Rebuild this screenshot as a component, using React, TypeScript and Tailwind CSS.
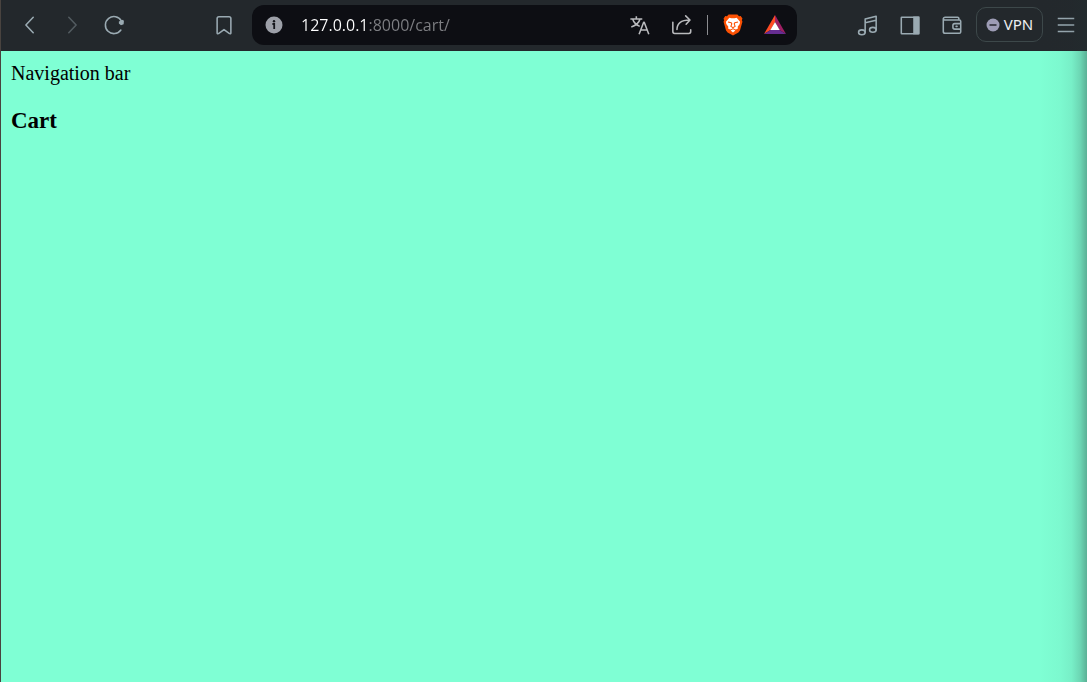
import type { ReactNode } from "react";

function ToolButton({ label, disabled = false, children }: { label: string; disabled?: boolean; children: ReactNode }) {
  return (
    <button
      type="button"
      aria-label={label}
      disabled={disabled}
      className="flex h-10 w-[42px] shrink-0 items-center justify-center text-[#9aaab2] disabled:text-[#525b60]"
    >
      {children}
    </button>
  );
}

function Icon({ children }: { children: ReactNode }) {
  return (
    <svg
      width="22"
      height="22"
      viewBox="0 0 24 24"
      fill="none"
      stroke="currentColor"
      strokeWidth="1.7"
      strokeLinecap="round"
      strokeLinejoin="round"
      aria-hidden="true"
    >
      {children}
    </svg>
  );
}

function BraveLogo() {
  return (
    <svg width="22" height="22" viewBox="0 0 24 24" aria-hidden="true">
      <path
        fill="#fb5104"
        d="M7.200 .5h9.600l1.800 2 1.800-.2 1.900 2.500-.6 2 .6 1.600-2.700 9.700-1.700 2.200L12 23.500l-5.900-3.200-1.700-2.200L1.700 8.400l.6-1.600-.6-2L3.600 2.300l1.800.2z"
      />
      <path
        fill="#fff"
        d="M8 4l2.300.5h3.400L16 4l3.700 4.400-.4 2.500-2.200 3.100.3 1.800-2.200 1.200-2.200-.9L12 15.700l-1 .4-2.200.9-2.200-1.200.3-1.800-2.200-3.100-.4-2.500zM12 16.500l2.600 1.600-2.600 2-2.600-2z"
      />
      <path
        fill="none"
        stroke="#fb5104"
        strokeWidth="1.200"
        d="M6.500 8.700l3.500.9.700 1.200-1 2.700 2.300 1.400 2.300-1.400-1-2.700.7-1.200 3.500-.9M12 14.900v1.200"
      />
    </svg>
  );
}

function RewardsLogo() {
  return (
    <svg width="24" height="24" viewBox="0 0 24 24" aria-hidden="true">
      <path fill="#ff4b24" d="M12 2v7L7.500 17 1 21z" />
      <path fill="#9e1f63" d="M12 2l11 19-6.500-4L12 9z" />
      <path fill="#662d91" d="M1 21l6.500-4h9l6.500 4z" />
      <path fill="#fff" d="M12 9l4.700 8H7.300z" />
    </svg>
  );
}

function AddressBar() {
  return (
    <div className="flex h-10 min-w-0 flex-1 items-center rounded-xl bg-[#0d0e13] px-px">
      <ToolButton label="View site information">
        <svg width="18" height="18" viewBox="0 0 18 18" aria-hidden="true">
          <circle cx="9" cy="9" r="8.500" fill="#9da0a8" />
          <circle cx="9" cy="5.300" r="1.200" fill="#15161b" />
          <path d="M7.400 8h1.800v5" stroke="#15161b" strokeWidth="1.800" fill="none" />
        </svg>
      </ToolButton>
      <input
        type="text"
        aria-label="Address"
        defaultValue="127.0.0.1:8000/cart/"
        spellCheck={false}
        className="ml-1 h-10 min-w-0 flex-1 bg-[linear-gradient(90deg,#fff_70px,#7e7f83_70px)] bg-clip-text pl-[2px] font-['Open_Sans','Noto_Sans',sans-serif] text-base text-transparent caret-white outline-none"
      />
      <ToolButton label="Translate this page">
        <span className="text-[#b9babd]">
          <Icon>
            <path
              strokeLinecap="butt"
              d="M1.500 5.500h13M8 2.500v3M4 5.500c1.200 4 4 6.500 7.700 8M12 5.500c-1 4.200-4.700 7-9.500 8.700M11 22l5-13h.6l5 13M12.700 17.500h7.300"
            />
          </Icon>
        </span>
      </ToolButton>
      <ToolButton label="Share this page">
        <span className="text-[#b9babd]">
          <Icon>
            <path d="M2 9v10.200a2 2 0 0 0 2 2h15.500a2 2 0 0 0 2-2v-2M6.500 17c0-6.500 4-10.500 14-10.500M16 2l4.700 4.500-4.200 4.700" />
          </Icon>
        </span>
      </ToolButton>
      <span className="mx-1 h-5 w-px shrink-0 bg-[#8b8c90]" />
      <ToolButton label="Brave Shields">
        <BraveLogo />
      </ToolButton>
      <ToolButton label="Brave Rewards">
        <RewardsLogo />
      </ToolButton>
    </div>
  );
}

function Toolbar() {
  return (
    <header className="flex h-[51px] items-center bg-[#23282c] pb-[2px] pl-2">
      <ToolButton label="Back">
        <Icon>
          <path d="M15.500 3.500L7.500 12l8 8.500" />
        </Icon>
      </ToolButton>
      <ToolButton label="Forward" disabled>
        <Icon>
          <path d="M8.500 3.500l8 8.500-8 8.500" />
        </Icon>
      </ToolButton>
      <ToolButton label="Reload">
        <Icon>
          <path d="M19.500 17.500A9.300 9.300 0 1 1 20 7.500" />
          <path fill="currentColor" stroke="none" d="M17.300 8.300l4.500-2 1 1.300-.3 3.600-2.900 1.200-2.300-2z" />
        </Icon>
      </ToolButton>
      <div className="ml-[68px] mr-[7px] shrink-0">
        <ToolButton label="Bookmark this page">
          <Icon>
            <path d="M4.500 5a2 2 0 0 1 2-2h11a2 2 0 0 1 2 2v15.700c0 .8-.9 1.100-1.500.6l-6-4.300-6 4.300c-.6.5-1.500.2-1.500-.6z" />
          </Icon>
        </ToolButton>
      </div>
      <AddressBar />
      <div className="ml-[50px] flex shrink-0 items-center">
        <ToolButton label="Media controls">
          <Icon>
            <ellipse cx="5.300" cy="20" rx="3.600" ry="2.700" />
            <ellipse cx="17.300" cy="17.300" rx="3.600" ry="2.700" />
            <path d="M8.900 20V5.500l12-3v14.800M8.900 9.500l12-2.700" />
          </Icon>
        </ToolButton>
        <ToolButton label="Side panel">
          <Icon>
            <rect x="2.500" y="3.500" width="19" height="18" rx=".5" />
            <path fill="currentColor" stroke="none" d="M15.500 2.700h6.800v19.500h-6.800z" />
          </Icon>
        </ToolButton>
        <ToolButton label="Wallet">
          <Icon>
            <path d="M4 6.500h16A1.500 1.500 0 0 1 21.500 8v11.500A1.500 1.500 0 0 1 20 21H4.500a2 2 0 0 1-2-2V5.500a2 2 0 0 1 2-2H18A1.500 1.500 0 0 1 19.500 5v1.500M2.500 5.300A1.500 1.500 0 0 0 4 6.500M21.500 10.500H15a2 2 0 0 0-2 2v2a2 2 0 0 0 2 2h6.500M16.500 13.500h1" />
          </Icon>
        </ToolButton>
        <button
          type="button"
          className="ml-[3px] mr-[2px] flex h-[35px] w-[67px] items-center justify-center gap-1 rounded-[10px] border border-[#3d484a] font-['Noto_Sans','Open_Sans',sans-serif] text-[15px] text-[#eeeff1]"
        >
          <svg width="14" height="14" viewBox="0 0 14 14" aria-hidden="true">
            <circle cx="7" cy="7" r="6.500" fill="#9d9cb5" />
            <path d="M3.500 7h7" stroke="#24262e" strokeWidth="1.500" />
          </svg>
          VPN
        </button>
        <ToolButton label="Menu">
          <Icon>
            <path strokeLinecap="butt" d="M3 5h18M3 12h18M3 19h18" />
          </Icon>
        </ToolButton>
      </div>
    </header>
  );
}

export default function App() {
  return (
    <div className="relative flex min-h-screen flex-col border-l border-[#49433f] bg-[#7fffd4]">
      <Toolbar />
      <main className="flex flex-1 flex-col gap-6 px-[10px] py-[10px] font-['Liberation_Serif',serif] text-black">
        <nav className="text-xl leading-6">Navigation bar</nav>
        <h3 className="text-[23px] font-bold leading-6">Cart</h3>
      </main>
      <div className="pointer-events-none absolute inset-y-0 right-0 w-12 bg-[linear-gradient(90deg,rgba(32,48,48,0)_0%,rgba(32,48,48,0.03)_45%,rgba(32,48,48,0.08)_68%,rgba(32,48,48,0.2)_86%,rgba(32,48,48,0.38)_100%)]" />
    </div>
  );
}
